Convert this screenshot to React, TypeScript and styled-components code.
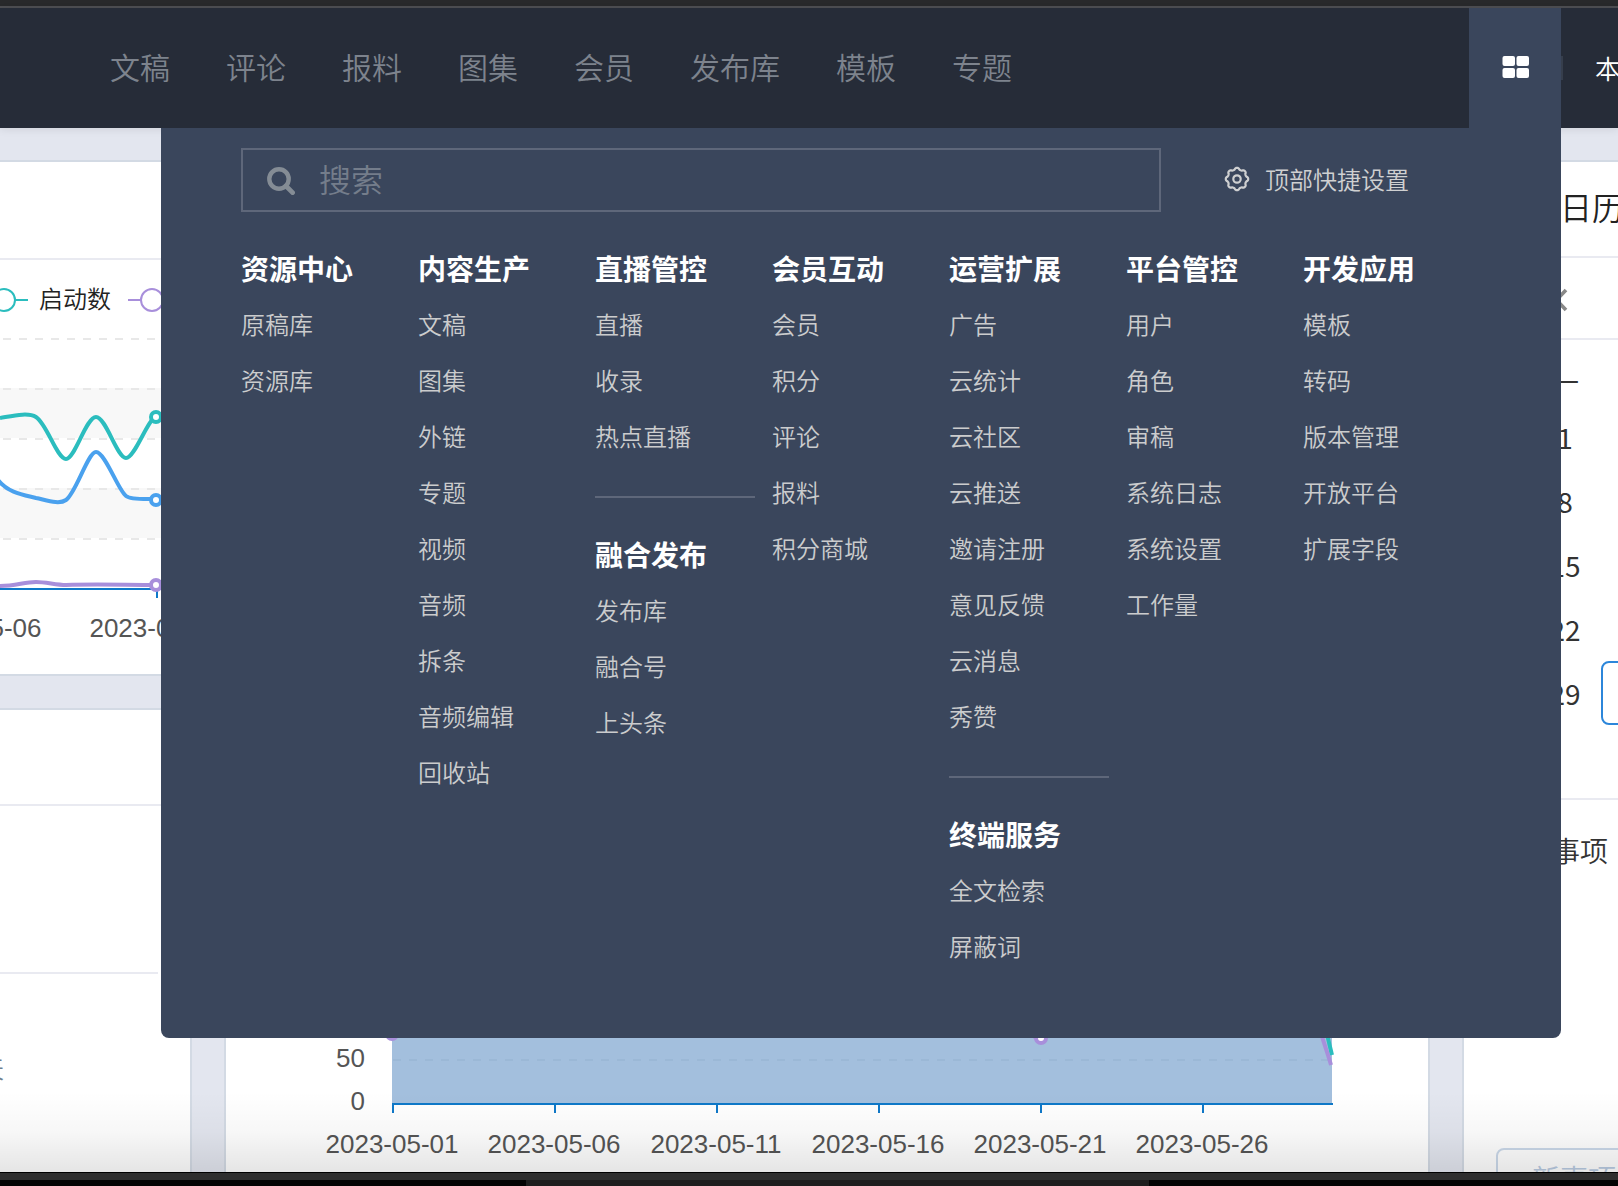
import React from "react";
import styled, { createGlobalStyle } from "styled-components";

const colors = {
  header: "#262c38",
  panel: "#3a465c",
  page: "#e3e6ef",
  edge: "#d3dae4",
  rule: "#e9eaf1",
  axis: "#0f79c9",
  teal: "#2bbdbe",
  blue: "#4aa1ee",
  purple: "#a88fdb",
};

const GlobalStyle = createGlobalStyle`
  * { box-sizing: border-box; }
  body {
    margin: 0;
    background: #000;
    font-family: "Noto Sans CJK SC", "Liberation Sans", sans-serif;
    font-weight: 350;
  }
  a { color: inherit; text-decoration: none; }
  button {
    margin: 0;
    padding: 0;
    border: 0;
    background: none;
    color: inherit;
    font: inherit;
    cursor: pointer;
  }
  ul, h2, h3 { margin: 0; padding: 0; list-style: none; font-weight: inherit; }
  svg { display: block; flex: none; }
`;

const Page = styled.div`
  display: flex;
  flex-direction: column;
  height: 100vh;
  overflow: hidden;
`;

const FrameTop = styled.div`
  flex: none;
  height: 8px;
  background: #28292b;
  border-bottom: 2px solid #4d4e52;
`;

const FrameBottom = styled.div`
  flex: none;
  height: 14px;
  border-top: 1px solid #000;
  background: #2e2e2e;
  display: flex;
  align-items: flex-end;
  justify-content: center;
`;

const FrameSegment = styled.div<{ $tone: string; $grow: number }>`
  flex: ${(p) => p.$grow} 1 0;
  height: 6px;
  background: ${(p) => p.$tone};
`;

/* ---------- top bar ---------- */

const Header = styled.header`
  position: relative;
  z-index: 2;
  flex: none;
  display: flex;
  align-items: center;
  height: 120px;
  padding-left: 110px;
  background: ${colors.header};
  box-shadow: 0 2px 8px rgba(0, 0, 0, 0.08);
`;

const Nav = styled.nav`
  flex: 1;
  display: flex;
  gap: 56px;
  padding-bottom: 5px;
  color: #7d838d;
  font-size: 30px;
  line-height: 44px;
`;

const LauncherButton = styled.button`
  display: flex;
  align-items: center;
  justify-content: center;
  width: 92px;
  height: 100%;
  padding: 0 0 2px 1px;
  background: ${colors.panel};
  color: #fff;
`;

const Account = styled.div`
  display: flex;
  align-items: center;
  width: 57px;
  gap: 32px;
  overflow: hidden;
  color: #fff;
  font-size: 26px;
  line-height: 40px;
  white-space: nowrap;

  &::before {
    content: "";
    flex: none;
    width: 2px;
    height: 24px;
    background: #363e4c;
  }
`;

/* ---------- launcher panel ---------- */

const Panel = styled.section`
  position: absolute;
  top: 100%;
  left: 161px;
  right: 57px;
  padding: 20px 80px 62px;
  background: ${colors.panel};
  border-radius: 0 0 8px 8px;
`;

const PanelTop = styled.div`
  display: flex;
  align-items: center;
  gap: 63px;
  margin-bottom: 28px;
`;

const SearchBox = styled.label`
  display: flex;
  align-items: center;
  gap: 24px;
  width: 920px;
  height: 64px;
  padding: 0 24px;
  border: 2px solid #5e677a;
  color: #848c95;
`;

const SearchInput = styled.input`
  flex: 1;
  min-width: 0;
  padding: 0 0 5px;
  border: 0;
  outline: 0;
  background: none;
  color: #fff;
  font: inherit;
  font-size: 32px;
  line-height: 44px;

  &::placeholder {
    color: #747d8b;
    opacity: 1;
  }
`;

const SettingsButton = styled.button`
  display: flex;
  align-items: center;
  gap: 15px;
  padding-bottom: 3px;
  color: #cfd0d1;
  font-size: 24px;
  line-height: 36px;
`;

const MenuGrid = styled.div`
  display: grid;
  grid-template-columns: repeat(7, 160px);
  column-gap: 17px;
  align-items: start;
  padding-bottom: 2px;
`;

const MenuGroup = styled.section`
  & + & {
    margin-top: 32px;
    padding-top: 28px;
    border-top: 2px solid #5e677a;
  }
`;

const MenuTitle = styled.h2`
  color: #fff;
  font-size: 28px;
  font-weight: 700;
  line-height: 56px;
`;

const MenuItem = styled.li`
  color: #cbcccd;
  font-size: 24px;
  line-height: 56px;
`;

/* ---------- dashboard ---------- */

const Dashboard = styled.main`
  position: relative;
  flex: 1;
  min-height: 0;
  display: grid;
  grid-template-columns: minmax(0, 1fr) 156px;
  grid-template-rows: minmax(0, 1fr);
  gap: 32px;
  padding-top: 32px;
  overflow: hidden;
  background: ${colors.page};

  &::after {
    content: "";
    position: absolute;
    inset: auto 0 0 0;
    height: 80px;
    background: linear-gradient(rgba(0, 0, 0, 0), rgba(0, 0, 0, 0.03) 50%, rgba(0, 0, 0, 0.1));
    pointer-events: none;
  }
`;

const Column = styled.div`
  display: grid;
  grid-template-rows: auto minmax(0, 1fr);
  gap: 32px;
`;

const LowerRow = styled.div`
  display: grid;
  grid-template-columns: 192px minmax(0, 1fr);
  gap: 32px;
`;

const Card = styled.section<{ $sides: string; $bottom?: boolean }>`
  display: flex;
  flex-direction: column;
  min-width: 0;
  overflow: hidden;
  background: #fff;
  border: 0 solid ${colors.edge};
  border-top-width: 2px;
  border-left-width: ${(p) => (p.$sides.includes("l") ? "2px" : "0")};
  border-right-width: ${(p) => (p.$sides.includes("r") ? "2px" : "0")};
  border-bottom-width: ${(p) => (p.$bottom ? "2px" : "0")};
`;

const CardHead = styled.div<{ $height: number }>`
  flex: none;
  display: flex;
  align-items: center;
  height: ${(p) => p.$height}px;
  padding: 0 0 6px 96px;
  border-bottom: 2px solid ${colors.rule};
  color: #222;
  font-size: 32px;
  line-height: 48px;
  white-space: nowrap;
`;

const Legend = styled.div`
  display: flex;
  align-items: center;
  gap: 17px;
  height: 78px;
  color: #222;
  font-size: 24px;
  line-height: 36px;
`;

const LegendItem = styled.span`
  display: flex;
  align-items: center;
  gap: 11px;
`;

const LegendText = styled.span`
  padding-bottom: 2px;
`;

const StatRow = styled.div`
  height: 168px;
  margin-right: 32px;
  border-bottom: 2px solid ${colors.rule};
`;

const StatUnit = styled.div`
  display: flex;
  justify-content: flex-end;
  width: 4px;
  padding-top: 76px;
  color: #6d7f90;
  font-size: 24px;
  line-height: 36px;
`;

const ChartFoot = styled.div`
  display: flex;
  flex: 1;
  align-items: flex-end;
`;

const AxisText = styled.text`
  fill: #555;
  font-family: "Liberation Sans", Arial, sans-serif;
  font-size: 26px;
  font-weight: 400;
`;

const MonthBar = styled.div`
  flex: none;
  display: flex;
  align-items: center;
  height: 82px;
  padding: 4px 0 0 90px;
  border-bottom: 2px solid ${colors.rule};
  color: #888;
`;

const Calendar = styled.div`
  flex: none;
  display: grid;
  grid-template-columns: repeat(2, 64px);
  column-gap: 4px;
  height: 460px;
  align-content: start;
  padding: 17px 0 0 69px;
  border-bottom: 2px solid ${colors.rule};
  color: #333;
  font-size: 28px;
  font-weight: 400;
`;

const Weekday = styled.span`
  grid-column: 1 / -1;
  width: 64px;
  line-height: 48px;
  text-align: center;
  font-weight: 350;
`;

const Day = styled.button<{ $today?: boolean }>`
  height: 64px;
  border: ${(p) => (p.$today ? "2px solid #2c86da" : "0")};
  border-radius: 8px;
  line-height: 60px;
  text-align: center;
`;

const Agenda = styled.div`
  flex: none;
  height: 348px;
  padding: 30px 0 0 88px;
  color: #333;
  font-size: 28px;
  line-height: 40px;
  white-space: nowrap;
`;

const NewEventButton = styled.button`
  flex: none;
  align-self: flex-start;
  height: 64px;
  margin-left: 32px;
  padding: 0 34px 4px;
  border: 2px solid #cbd9ea;
  border-radius: 8px;
  color: #b9cbe2;
  font-size: 28px;
  line-height: 56px;
  white-space: nowrap;
`;

/* ---------- drawings ---------- */

const GridIcon = () => (
  <svg width="28" height="22" viewBox="0 0 28 22" fill="currentColor" aria-hidden="true">
    <rect x="0.5" y="0" width="12.5" height="10" rx="2" />
    <rect x="14.5" y="0" width="12.5" height="10" rx="2" />
    <rect x="0.5" y="12" width="12.5" height="10" rx="2" />
    <rect x="14.5" y="12" width="12.5" height="10" rx="2" />
  </svg>
);

const SearchIcon = () => (
  <svg width="28" height="30" viewBox="0 -2 28 30" fill="none" stroke="currentColor" aria-hidden="true">
    <circle cx="12" cy="12" r="9.7" strokeWidth="4.4" />
    <path d="M19 19 25.6 25.6" strokeWidth="4.8" strokeLinecap="round" />
  </svg>
);

// Eight-lobed outline traced around the hub of the gear.
const gearPath =
  Array.from({ length: 96 }, (_, i) => {
    const a = (i / 96) * Math.PI * 2;
    const wave = Math.cos(8 * a);
    const r = 10.3 + 0.9 * Math.sign(wave) * Math.sqrt(Math.abs(wave));
    return `${i ? "L" : "M"}${(13 + r * Math.sin(a)).toFixed(2)} ${(13 - r * Math.cos(a)).toFixed(2)}`;
  }).join("") + "Z";

const GearIcon = () => (
  <svg width="26" height="26" viewBox="0 0 26 26" fill="none" stroke="currentColor" strokeWidth="2.2" strokeLinejoin="round" aria-hidden="true">
    <path d={gearPath} />
    <circle cx="13" cy="13" r="3.7" />
  </svg>
);

const ChevronLeft = () => (
  <svg width="14" height="24" viewBox="0 0 14 24" fill="none" stroke="currentColor" strokeWidth="3.6" aria-hidden="true">
    <path d="M12 2 2.5 12 12 22" />
  </svg>
);

const Marker = ({ x, y, color }: { x: number; y: number; color: string }) => (
  <circle cx={x} cy={y} r="5" fill="#fff" stroke={color} strokeWidth="4" />
);

const TrendChart = () => (
  <svg width="200" height="336" viewBox="0 338 200 336" role="img" aria-label="趋势图">
    <rect x="0" y="388" width="200" height="50" fill="#f8f8f8" />
    <rect x="0" y="488" width="200" height="50" fill="#f8f8f8" />
    {[339, 389, 439, 489, 539].map((y) => (
      <path key={y} d={`M3 ${y}H200`} stroke="#e8e8e8" strokeWidth="2" strokeDasharray="8 8" />
    ))}
    <path d="M0 589H200M157 589V598" stroke={colors.axis} strokeWidth="2" fill="none" />
    <g fill="none" strokeWidth="4">
      <path d="M0 418C12 416 28 412 36 417C47 424 57 459 66 459C75 459 86 417 96 417C106 417 117 458 126 458C135 458 148 418 156 417" stroke={colors.teal} />
      <path d="M-2 480C8 493 24 495 36 498C46 500 59 505 66 500C76 493 88 452 96 452C105 452 118 490 126 496C131 500 146 499 156 499" stroke={colors.blue} />
      <path d="M0 586C16 586 24 582 36 582C46 582 56 585 66 585C96 584 126 585 156 585" stroke={colors.purple} />
    </g>
    <Marker x={156} y={417} color={colors.teal} />
    <Marker x={156} y={500} color={colors.blue} />
    <Marker x={156} y={585} color={colors.purple} />
    <AxisText x="-25" y="637" textAnchor="middle">2023-05-06</AxisText>
    <AxisText x="155" y="637" textAnchor="middle">2023-05-11</AxisText>
  </svg>
);

const dates = ["2023-05-01", "2023-05-06", "2023-05-11", "2023-05-16", "2023-05-21", "2023-05-26"];

const AreaChart = () => (
  <svg width="1202" height="142" viewBox="226 1030 1202 142" role="img" aria-label="统计图">
    <rect x="392" y="1020" width="940" height="84" fill="#a3bfdd" />
    <path d="M393 1060H1332" stroke="#9bb8d6" strokeWidth="2" strokeDasharray="8 8" />
    <path d="M1325 1026 1332 1055" stroke={colors.teal} strokeWidth="4" />
    <path d="M1317 1020C1322 1038 1328 1054 1331 1065M1020 1024 1036 1038" stroke={colors.purple} strokeWidth="4" fill="none" />
    <Marker x={392} y={1034} color={colors.purple} />
    <Marker x={1041} y={1038} color={colors.purple} />
    <path d="M392 1104H1333" stroke={colors.axis} strokeWidth="2" />
    {dates.map((d, i) => (
      <g key={d}>
        <path d={`M${393 + i * 162} 1104V1113`} stroke={colors.axis} strokeWidth="2" />
        <AxisText x={392 + i * 162} y="1153" textAnchor="middle">{d}</AxisText>
      </g>
    ))}
    <AxisText x="365" y="1067" textAnchor="end">50</AxisText>
    <AxisText x="365" y="1110" textAnchor="end">0</AxisText>
  </svg>
);

/* ---------- content ---------- */

const navItems = ["文稿", "评论", "报料", "图集", "会员", "发布库", "模板", "专题"];

type Group = { title: string; items: string[] };

const menu: Group[][] = [
  [{ title: "资源中心", items: ["原稿库", "资源库"] }],
  [{ title: "内容生产", items: ["文稿", "图集", "外链", "专题", "视频", "音频", "拆条", "音频编辑", "回收站"] }],
  [
    { title: "直播管控", items: ["直播", "收录", "热点直播"] },
    { title: "融合发布", items: ["发布库", "融合号", "上头条"] },
  ],
  [{ title: "会员互动", items: ["会员", "积分", "评论", "报料", "积分商城"] }],
  [
    { title: "运营扩展", items: ["广告", "云统计", "云社区", "云推送", "邀请注册", "意见反馈", "云消息", "秀赞"] },
    { title: "终端服务", items: ["全文检索", "屏蔽词"] },
  ],
  [{ title: "平台管控", items: ["用户", "角色", "审稿", "系统日志", "系统设置", "工作量"] }],
  [{ title: "开发应用", items: ["模板", "转码", "版本管理", "开放平台", "扩展字段"] }],
];

const mondays = [1, 8, 15, 22, 29];

export default function App() {
  return (
    <Page>
      <GlobalStyle />
      <FrameTop />
      <Header>
        <Nav>
          {navItems.map((n) => (
            <a key={n} href="#">{n}</a>
          ))}
        </Nav>
        <LauncherButton aria-label="应用" aria-expanded="true">
          <GridIcon />
        </LauncherButton>
        <Account>本</Account>

        <Panel>
          <PanelTop>
            <SearchBox>
              <SearchIcon />
              <SearchInput type="text" placeholder="搜索" aria-label="搜索" />
            </SearchBox>
            <SettingsButton>
              <GearIcon />
              顶部快捷设置
            </SettingsButton>
          </PanelTop>
          <MenuGrid>
            {menu.map((column, i) => (
              <div key={i}>
                {column.map((group) => (
                  <MenuGroup key={group.title}>
                    <MenuTitle>{group.title}</MenuTitle>
                    <ul>
                      {group.items.map((item) => (
                        <MenuItem key={item}>
                          <a href="#">{item}</a>
                        </MenuItem>
                      ))}
                    </ul>
                  </MenuGroup>
                ))}
              </div>
            ))}
          </MenuGrid>
        </Panel>
      </Header>

      <Dashboard>
        <Column>
          <Card $sides="r" $bottom>
            <CardHead $height={98} />
            <Legend>
              <LegendItem>
                <svg width="28" height="26" viewBox="0 0 28 26" fill="none" stroke={colors.teal} strokeWidth="2" aria-hidden="true">
                  <circle cx="4" cy="14" r="11" />
                  <path d="M15 14H28" />
                </svg>
                <LegendText>启动数</LegendText>
              </LegendItem>
              <svg width="50" height="26" viewBox="0 0 50 26" fill="none" stroke={colors.purple} strokeWidth="2" aria-hidden="true">
                <circle cx="24" cy="14" r="11" />
                <path d="M0 14H13" />
              </svg>
            </Legend>
            <TrendChart />
          </Card>
          <LowerRow>
            <Card $sides="r">
              <CardHead $height={96} />
              <StatRow />
              <StatUnit>天</StatUnit>
            </Card>
            <Card $sides="lr">
              <ChartFoot>
                <AreaChart />
              </ChartFoot>
            </Card>
          </LowerRow>
        </Column>

        <Card $sides="l">
          <CardHead as="h3" $height={96}>日历</CardHead>
          <MonthBar>
            <button aria-label="上个月">
              <ChevronLeft />
            </button>
          </MonthBar>
          <Calendar>
            <Weekday>一</Weekday>
            {mondays.map((d) => (
              <React.Fragment key={d}>
                <Day>{d}</Day>
                <Day $today={d === 29} aria-label={String(d + 1)} />
              </React.Fragment>
            ))}
          </Calendar>
          <Agenda>事项</Agenda>
          <NewEventButton>新事项</NewEventButton>
        </Card>
      </Dashboard>

      <FrameBottom>
        <FrameSegment $tone="#030303" $grow={526} />
        <FrameSegment $tone="#1e1e1e" $grow={623} />
        <FrameSegment $tone="#030303" $grow={469} />
      </FrameBottom>
    </Page>
  );
}
